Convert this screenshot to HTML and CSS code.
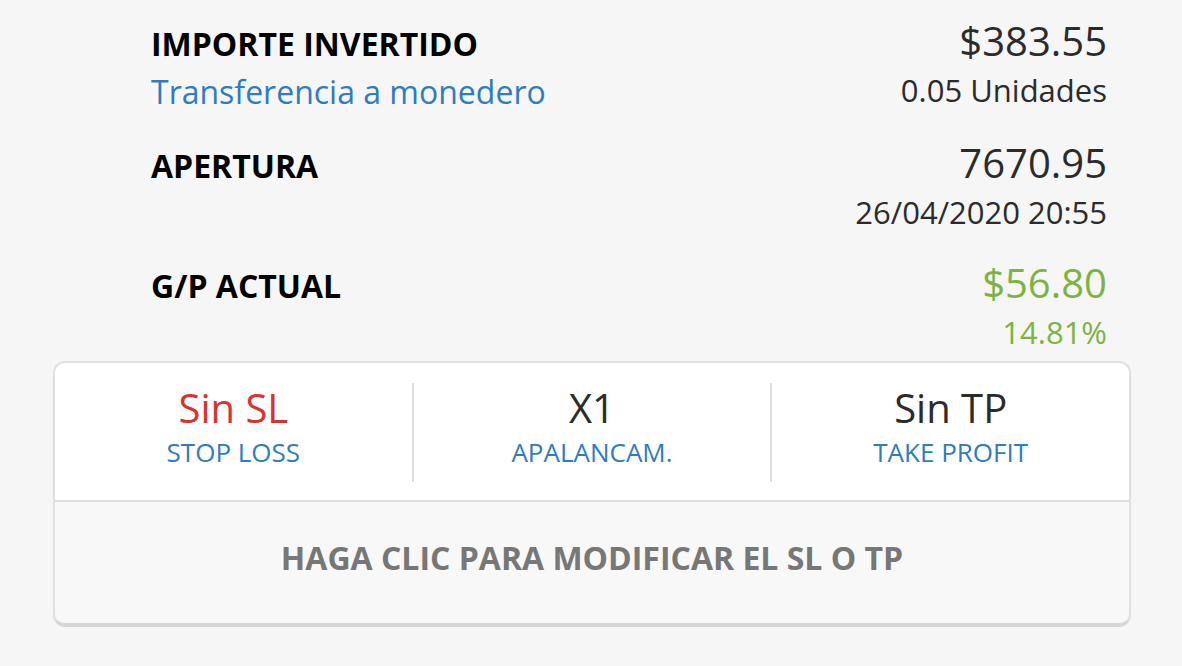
FILE: index.html
```html
<!DOCTYPE html>
<html lang="es">
<head>
    <meta charset="UTF-8">
    <title>Posición</title>
    <link rel="stylesheet" href="styles.css">
</head>
<body>
<div class="page">
    <div class="summary">
        <div class="row">
            <div class="left">
                <div class="label">IMPORTE INVERTIDO</div>
                <a class="link" href="#">Transferencia a monedero</a>
            </div>
            <div class="right">
                <div class="value">$383.55</div>
                <div class="sub">0.05 Unidades</div>
            </div>
        </div>
        <div class="row">
            <div class="left">
                <div class="label">APERTURA</div>
            </div>
            <div class="right">
                <div class="value">7670.95</div>
                <div class="sub">26/04/2020 20:55</div>
            </div>
        </div>
        <div class="row">
            <div class="left">
                <div class="label">G/P ACTUAL</div>
            </div>
            <div class="right">
                <div class="value green">$56.80</div>
                <div class="sub green">14.81%</div>
            </div>
        </div>
    </div>
    <div class="card">
        <div class="stats">
            <div class="stat">
                <div class="stat-value red">Sin SL</div>
                <div class="stat-name">STOP LOSS</div>
            </div>
            <div class="divider"></div>
            <div class="stat">
                <div class="stat-value">X1</div>
                <div class="stat-name">APALANCAM.</div>
            </div>
            <div class="divider"></div>
            <div class="stat">
                <div class="stat-value">Sin TP</div>
                <div class="stat-name">TAKE PROFIT</div>
            </div>
        </div>
        <div class="edit">HAGA CLIC PARA MODIFICAR EL SL O TP</div>
    </div>
</div>
</body>
</html>
```

FILE: styles.css
```css
body,html{
    margin: 0;
    padding: 0;
    width: 100%;
    height: 100%;
    overflow: hidden;
    background-color: #f6f6f6;
    font-family: "Open Sans", "Noto Sans", sans-serif;
}
.page{
    padding-top: 17px;
}
.summary{
    padding: 0 75px 0 151px;
    display: flex;
    flex-direction: column;
    gap: 27px;
}
.row{
    display: flex;
    justify-content: space-between;
    align-items: baseline;
}
.label{
    font-size: 32px;
    line-height: 40px;
    font-weight: bold;
    color: #000;
}
.link{
    display: block;
    margin-top: 8px;
    font-size: 32px;
    line-height: 40px;
    color: #2f7cbf;
    text-decoration: none;
}
.right{
    text-align: right;
    color: #2b2b2b;
}
.value{
    font-size: 40px;
    line-height: 48px;
}
.sub{
    font-size: 31px;
    line-height: 40px;
    margin-top: 5px;
}
.green{
    color: #7cb342;
}
.card{
    margin: 9px 51px 0 53px;
    border: 2px solid #e0e0e0;
    border-bottom: 4px solid #d6d6d6;
    border-radius: 12px;
    overflow: hidden;
    background-color: #f8f8f8;
}
.stats{
    display: flex;
    background-color: #fff;
    border-bottom: 2px solid #e0e0e0;
}
.stat{
    flex: 1;
    text-align: center;
    padding: 22px 0 31px;
}
.divider{
    width: 2px;
    background-color: #ddd;
    margin: 20px 0 18px;
}
.stat-value{
    font-size: 40px;
    line-height: 46px;
    color: #2b2b2b;
}
.stat-value.red{
    color: #d7342e;
}
.stat-name{
    font-size: 26px;
    line-height: 34px;
    margin-top: 4px;
    color: #2f7cbf;
}
.edit{
    text-align: center;
    font-size: 32px;
    line-height: 46px;
    padding: 33px 0 42px;
    font-weight: bold;
    color: #777;
}
```
